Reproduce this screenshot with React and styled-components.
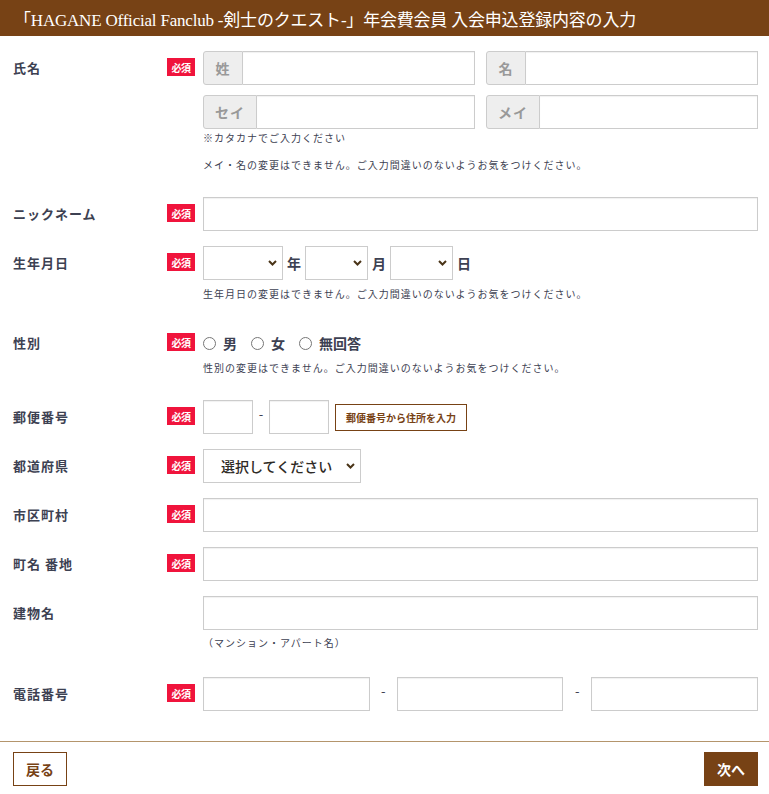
import React from "react";
import styled, { createGlobalStyle } from "styled-components";

const brown = "#774215";
const ink = "#3d4152";

const Global = createGlobalStyle`
  html, body { margin: 0; padding: 0; background: #fff; }
  body { font-family: "Noto Sans CJK JP", "Noto Sans", sans-serif; color: ${ink}; }
  * { box-sizing: border-box; }
`;

const Page = styled.div`
  width: 769px;
`;

const Header = styled.header`
  height: 36px;
  background: ${brown};
  color: #fff;
  display: flex;
  align-items: center;
  padding-left: 14px;
  font-family: "Liberation Serif", "Noto Sans CJK JP", serif;
  font-size: 17px;
  letter-spacing: -0.2px;
  white-space: nowrap;
`;

const Form = styled.div`
  padding: 15px 11px 15px 13px;
`;

const Row = styled.div`
  display: grid;
  grid-template-columns: 154px 36px 1fr;
  margin-bottom: 15px;
`;

const Label = styled.div`
  height: 34px;
  line-height: 34px;
  font-size: 13px;
  font-weight: 700;
  letter-spacing: 1px;
  color: ${ink};
  white-space: nowrap;
`;

const Badge = styled.span`
  display: inline-flex;
  align-items: center;
  justify-content: center;
  width: 28px;
  height: 18px;
  margin-top: 7px;
  background: #f0143c;
  color: #fff;
  font-size: 10px;
  font-weight: 700;
  font-family: "Noto Sans CJK JP", serif;
  letter-spacing: -0.5px;
`;

const Field = styled.div`
  min-width: 0;
`;

const NameGrid = styled.div`
  display: grid;
  grid-template-columns: 1fr 1fr;
  column-gap: 11px;
  row-gap: 10px;
`;

const Group = styled.div`
  display: flex;
  height: 34px;
`;

const Addon = styled.span`
  width: ${(p) => p.$w}px;
  flex: none;
  display: flex;
  align-items: center;
  justify-content: center;
  background: #eee;
  border: 1px solid #ccc;
  border-radius: 3px 0 0 3px;
  color: #999;
  font-size: 14px;
  font-weight: 700;
  letter-spacing: 1px;
`;

const TextInput = styled.input`
  height: 34px;
  width: ${(p) => (p.$w ? `${p.$w}px` : "100%")};
  flex: ${(p) => (p.$w ? "none" : "1 1 auto")};
  min-width: 0;
  border: 1px solid #ccc;
  border-left-width: ${(p) => (p.$joined ? 0 : 1)}px;
  box-shadow: inset 0 1px 1px rgba(0, 0, 0, 0.06);
  background: #fff;
  padding: 0 8px;
  font-size: 14px;
  outline: none;
  display: block;
`;

const Note = styled.p`
  margin: ${(p) => p.$mt}px 0 ${(p) => p.$mb}px;
  font-size: 10px;
  line-height: 14px;
  letter-spacing: 1px;
  color: ${ink};
`;

const Inline = styled.div`
  display: flex;
  align-items: center;
  height: 34px;
  gap: ${(p) => p.$gap || 0}px;
`;

const Unit = styled.span`
  font-size: 14px;
  font-weight: 700;
  color: ${ink};
`;

const SelectWrap = styled.div`
  position: relative;
  width: ${(p) => p.$w}px;
  height: 34px;
  flex: none;
`;

const Select = styled.select`
  appearance: none;
  -webkit-appearance: none;
  width: 100%;
  height: 34px;
  border: 1px solid #ccc;
  border-radius: 0;
  background: #fff;
  padding: 0 20px 0 17px;
  font-family: "Noto Sans CJK JP", sans-serif;
  font-size: 14px;
  font-weight: 500;
  letter-spacing: 0;
  color: #2e2a25;
  outline: none;
`;

const Chevron = styled.svg`
  position: absolute;
  right: ${(p) => p.$r || 7}px;
  top: 50%;
  margin-top: -3px;
  width: 9px;
  height: 6px;
  pointer-events: none;
`;

const RadioItem = styled.label`
  display: inline-flex;
  align-items: center;
  gap: 7px;
  margin-right: 14px;
  font-size: 14px;
  font-weight: 700;
  color: ${ink};
`;

const Radio = styled.input`
  margin: 0;
  width: 13px;
  height: 13px;
`;

const Dash = styled.span`
  width: ${(p) => p.$w}px;
  flex: none;
  text-align: center;
  font-size: 13px;
  color: ${ink};
  margin-top: -8px;
`;

const SmallButton = styled.button`
  height: 27px;
  margin-left: 6px;
  padding: 0 10px;
  border: 1px solid ${brown};
  background: #fff;
  color: ${brown};
  font-family: "Noto Sans CJK JP", sans-serif;
  font-size: 10px;
  font-weight: 700;
  letter-spacing: 0;
  white-space: nowrap;
`;

const Divider = styled.hr`
  margin: 0;
  border: 0;
  border-top: 1px solid #b4956c;
`;

const Footer = styled.div`
  display: flex;
  justify-content: space-between;
  padding: 10px 11px 0 13px;
`;

const FootButton = styled.button`
  width: 54px;
  height: 34px;
  border: 1px solid ${brown};
  background: ${(p) => (p.$primary ? brown : "#fff")};
  color: ${(p) => (p.$primary ? "#fff" : brown)};
  font-family: "Noto Sans CJK JP", serif;
  font-size: 14px;
  font-weight: 700;
  padding: 0;
`;

const Arrow = ({ r }) => (
  <Chevron $r={r} viewBox="0 0 9 6">
    <path d="M1 1l3.5 3.5L8 1" fill="none" stroke="#4a3418" strokeWidth="2" />
  </Chevron>
);

const Req = () => <Badge>必須</Badge>;

export default function App() {
  return (
    <Page>
      <Global />
      <Header>「HAGANE Official Fanclub -剣士のクエスト-」年会費会員 入会申込登録内容の入力</Header>
      <Form>
        <Row>
          <Label>氏名</Label>
          <div><Req /></div>
          <Field>
            <NameGrid>
              <Group><Addon $w={40}>姓</Addon><TextInput $joined /></Group>
              <Group><Addon $w={40}>名</Addon><TextInput $joined /></Group>
              <Group><Addon $w={54}>セイ</Addon><TextInput $joined /></Group>
              <Group><Addon $w={54}>メイ</Addon><TextInput $joined /></Group>
            </NameGrid>
            <Note $mt={2} $mb={0}>※カタカナでご入力ください</Note>
            <Note $mt={13} $mb={10}>メイ・名の変更はできません。ご入力間違いのないようお気をつけください。</Note>
          </Field>
        </Row>

        <Row>
          <Label>ニックネーム</Label>
          <div><Req /></div>
          <Field><TextInput /></Field>
        </Row>

        <Row>
          <Label>生年月日</Label>
          <div><Req /></div>
          <Field>
            <Inline $gap={4}>
              <SelectWrap $w={80}><Select><option></option></Select><Arrow r={6} /></SelectWrap>
              <Unit>年</Unit>
              <SelectWrap $w={63}><Select><option></option></Select><Arrow r={6} /></SelectWrap>
              <Unit>月</Unit>
              <SelectWrap $w={63}><Select><option></option></Select><Arrow r={6} /></SelectWrap>
              <Unit>日</Unit>
            </Inline>
            <Note $mt={7} $mb={10}>生年月日の変更はできません。ご入力間違いのないようお気をつけください。</Note>
          </Field>
        </Row>

        <Row>
          <Label>性別</Label>
          <div><Req /></div>
          <Field>
            <Inline>
              <RadioItem><Radio type="radio" name="sex" />男</RadioItem>
              <RadioItem><Radio type="radio" name="sex" />女</RadioItem>
              <RadioItem><Radio type="radio" name="sex" />無回答</RadioItem>
            </Inline>
            <Note $mt={1} $mb={10}>性別の変更はできません。ご入力間違いのないようお気をつけください。</Note>
          </Field>
        </Row>

        <Row>
          <Label>郵便番号</Label>
          <div><Req /></div>
          <Field>
            <Inline>
              <TextInput $w={50} />
              <Dash $w={16}>-</Dash>
              <TextInput $w={60} />
              <SmallButton>郵便番号から住所を入力</SmallButton>
            </Inline>
          </Field>
        </Row>

        <Row>
          <Label>都道府県</Label>
          <div><Req /></div>
          <Field>
            <SelectWrap $w={158}>
              <Select><option>選択してください</option></Select>
              <Arrow r={6} />
            </SelectWrap>
          </Field>
        </Row>

        <Row>
          <Label>市区町村</Label>
          <div><Req /></div>
          <Field><TextInput /></Field>
        </Row>

        <Row>
          <Label>町名 番地</Label>
          <div><Req /></div>
          <Field><TextInput /></Field>
        </Row>

        <Row>
          <Label>建物名</Label>
          <div />
          <Field>
            <TextInput />
            <Note $mt={6} $mb={12}>（マンション・アパート名）</Note>
          </Field>
        </Row>

        <Row>
          <Label>電話番号</Label>
          <div><Req /></div>
          <Field>
            <Inline>
              <TextInput />
              <Dash $w={27}>-</Dash>
              <TextInput />
              <Dash $w={28}>-</Dash>
              <TextInput />
            </Inline>
          </Field>
        </Row>
      </Form>
      <Divider />
      <Footer>
        <FootButton>戻る</FootButton>
        <FootButton $primary>次へ</FootButton>
      </Footer>
    </Page>
  );
}
